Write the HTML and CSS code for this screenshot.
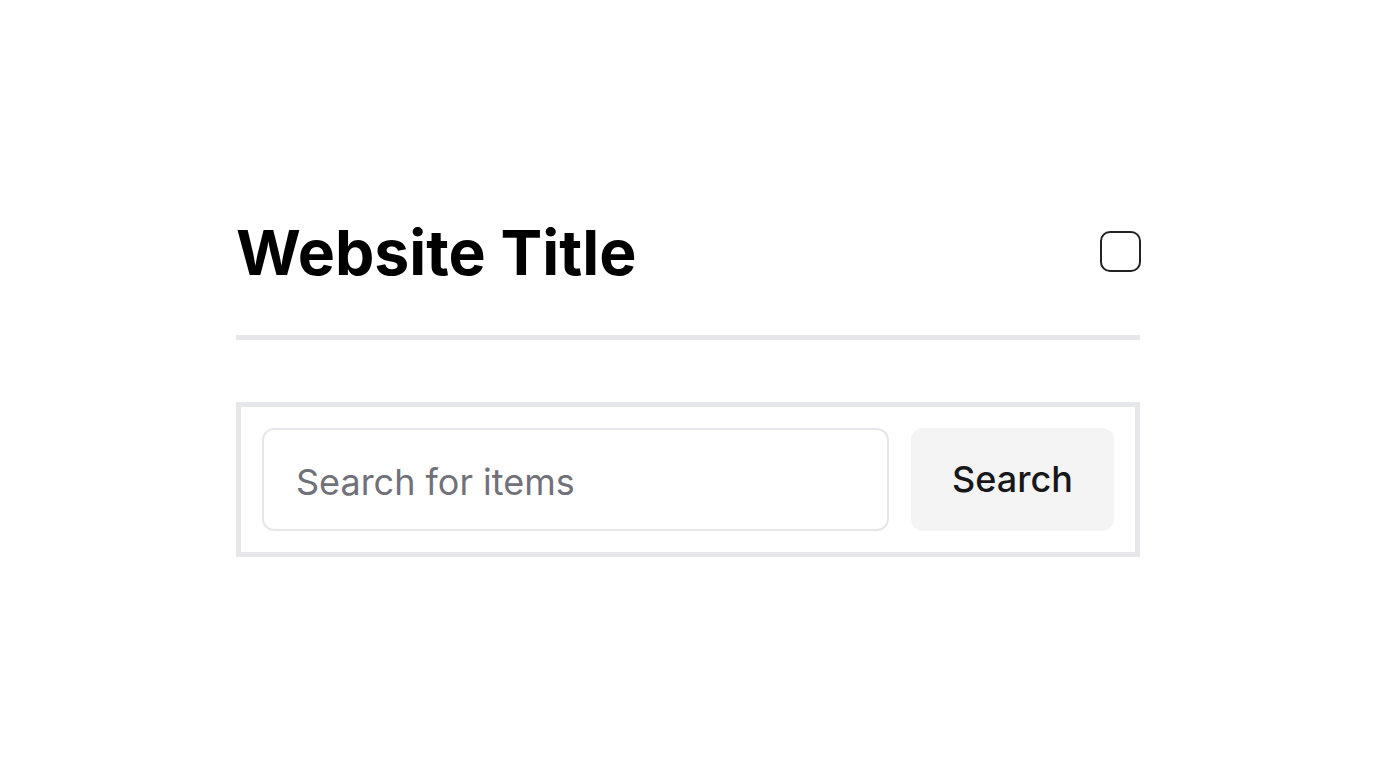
FILE: index.html
```html
<!DOCTYPE html>
<html lang="en">
<head>
<meta charset="utf-8">
<title>Website Title</title>
<link rel="stylesheet" href="styles.css">
</head>
<body>
<main class="page">
  <header class="header">
    <h1 class="title">Website Title</h1>
    <input class="check" type="checkbox" aria-label="Toggle">
  </header>
  <hr class="divider">
  <form class="search" onsubmit="return false">
    <input class="search-input" type="text" placeholder="Search for items">
    <button class="search-btn" type="submit">Search</button>
  </form>
</main>
</body>
</html>
```
FILE: styles.css
```css
* { box-sizing: border-box; }
html, body { margin: 0; padding: 0; background: #fff; }
body { font-family: Inter, "Noto Sans", sans-serif; color: #000; }
.page {
  width: 904px;
  margin: 0 auto;
  padding-top: 212px;
}
.header {
  display: flex;
  align-items: center;
  justify-content: space-between;
  height: 80px;
}
.title {
  margin: 0;
  font-size: 62.5px;
  font-weight: 700;
  line-height: 1;
}
.check {
  appearance: none;
  -webkit-appearance: none;
  margin: 0 -0.5px 2px 0;
  width: 41px;
  height: 41px;
  border: 2.5px solid #222;
  border-radius: 10px;
  background: #fff;
}
.divider {
  margin: 43px 0 0;
  height: 4.5px;
  border: 0;
  background: #e5e7eb;
}
.search {
  margin-top: 62px;
  display: flex;
  gap: 22px;
  padding: 21px;
  border: 5px solid #e5e7eb;
}
.search-input {
  flex: 1;
  height: 103px;
  border: 2px solid #e5e7eb;
  border-radius: 12px;
  padding: 6px 32px 0;
  font-family: inherit;
  font-size: 36px;
  color: #18181b;
  outline: none;
}
.search-input::placeholder { color: #71717a; }
.search-btn {
  width: 203px;
  height: 103px;
  border: 0;
  border-radius: 12px;
  background: #f4f4f5;
  font-family: inherit;
  font-size: 36px;
  font-weight: 500;
  color: #18181b;
}
```
